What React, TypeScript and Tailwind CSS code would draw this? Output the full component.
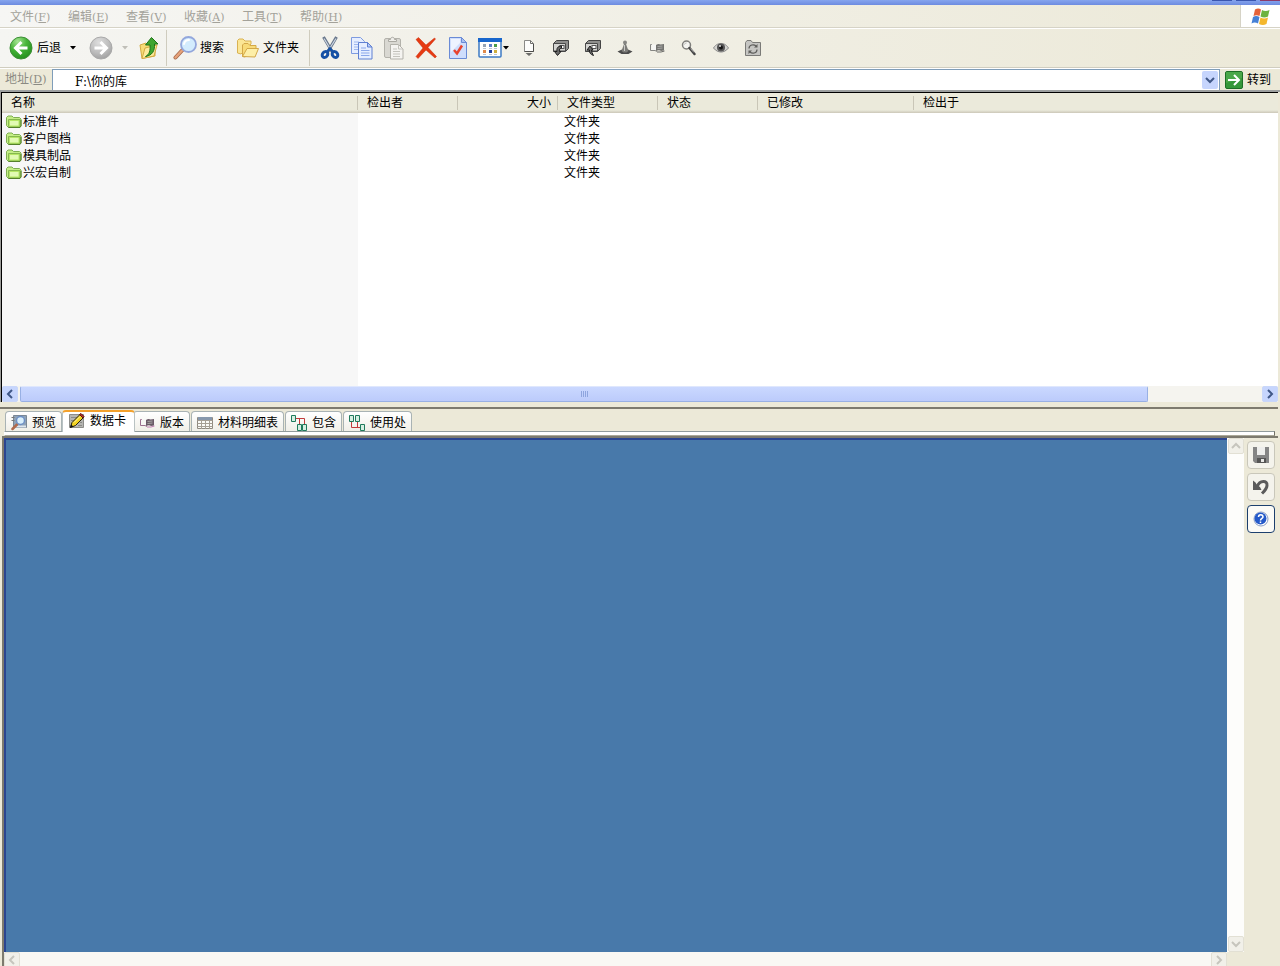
import React, { useState } from 'react'

const menus = [
    { label: '文件', key: 'F' },
    { label: '编辑', key: 'E' },
    { label: '查看', key: 'V' },
    { label: '收藏', key: 'A' },
    { label: '工具', key: 'T' },
    { label: '帮助', key: 'H' },
]

const folders = ['标准件', '客户图档', '模具制品', '兴宏自制']

/* ---------- icons ---------- */

function BackIcon() {
    return (
        <svg width="24" height="24" viewBox="0 0 24 24" aria-hidden="true">
            <defs>
                <radialGradient id="backFill" cx="0.35" cy="0.2" r="0.9">
                    <stop offset="0" stopColor="#a5e493" />
                    <stop offset="0.45" stopColor="#46b438" />
                    <stop offset="1" stopColor="#1f8a1a" />
                </radialGradient>
            </defs>
            <circle cx="12" cy="12" r="11" fill="url(#backFill)" stroke="#3d8f36" />
            <path d="M18.500 12H7.500M12.500 6L6.500 12l6 6" fill="none" stroke="#fff" strokeWidth="3" />
        </svg>
    )
}

function ForwardIcon() {
    return (
        <svg width="24" height="24" viewBox="0 0 24 24" aria-hidden="true">
            <defs>
                <radialGradient id="fwdFill" cx="0.4" cy="0.25" r="0.8">
                    <stop offset="0" stopColor="#dedede" />
                    <stop offset="0.6" stopColor="#bcbcbc" />
                    <stop offset="1" stopColor="#9e9e9e" />
                </radialGradient>
            </defs>
            <circle cx="12" cy="12" r="11" fill="url(#fwdFill)" stroke="#a9a9a9" />
            <path d="M5.500 12h11M11.500 6l6 6-6 6" fill="none" stroke="#fff" strokeWidth="3" />
        </svg>
    )
}

function UpIcon() {
    return (
        <svg width="22" height="24" viewBox="0 0 22 24" aria-hidden="true">
            <path d="M2 9l6-2 2 2 7-1v12L4 22.500z" fill="#f7dc76" stroke="#d3aa41" />
            <path d="M4 22.500L7 12l12-3-3 11z" fill="#fdeb9c" stroke="#d3aa41" />
            <path d="M7.500 20.500c4-2 5-6 4.500-11.500H7.500L13.500 1.500 20 8h-3.500c.5 7-2.500 11.500-9 12.500z" fill="#3fa52f" stroke="#1c7316" />
        </svg>
    )
}

function SearchIcon() {
    return (
        <svg width="24" height="24" viewBox="0 0 24 24" aria-hidden="true">
            <path d="M9 14.500L2.500 21.500" stroke="#a4674a" strokeWidth="4" strokeLinecap="round" />
            <path d="M9 14.500L2.500 21.500" stroke="#e6a27a" strokeWidth="2.500" strokeLinecap="round" />
            <circle cx="15.500" cy="8.500" r="7.500" fill="#d3ecfd" stroke="#93a7dc" strokeWidth="1.800" />
            <path d="M11 8c.5-2.500 2.500-4 5-4" fill="none" stroke="#fff" strokeWidth="2" strokeLinecap="round" />
        </svg>
    )
}

function FoldersIcon() {
    return (
        <svg width="24" height="24" viewBox="0 0 24 24" aria-hidden="true">
            <path d="M1.500 17V4.500L3 3h4l2 2h6v3L5 18z" fill="#fbe695" stroke="#d9b252" />
            <path d="M6.500 20.500V9L8 7.500h4l2 2h6v3L9 21z" fill="#f8db78" stroke="#d3a848" />
            <path d="M6.500 20.500L11 12.500h11.500L19 21z" fill="#fdefa8" stroke="#d3a848" strokeLinejoin="round" />
        </svg>
    )
}

function CutIcon() {
    return (
        <svg width="22" height="24" viewBox="0 0 22 24" aria-hidden="true">
            <path d="M4.500 1L13 15.500M17.500 1L9 15.500" stroke="#66758a" strokeWidth="3" />
            <path d="M5 2.500L12 14M17 2.500L11 12" stroke="#cdd6e2" strokeWidth="1.200" />
            <ellipse cx="6" cy="18.500" rx="2.500" ry="3.200" transform="rotate(40 6 18.500)" fill="none" stroke="#1551a5" strokeWidth="3" />
            <ellipse cx="16" cy="18.500" rx="2.500" ry="3.200" transform="rotate(-40 16 18.500)" fill="none" stroke="#1551a5" strokeWidth="3" />
            <path d="M8 16l3-3.500 3 3.500" fill="none" stroke="#1551a5" strokeWidth="2.500" />
        </svg>
    )
}

function CopyIcon() {
    return (
        <svg width="22" height="24" viewBox="0 0 22 24" aria-hidden="true">
            <path d="M.5 1.500h9l4 4v12H.5z" fill="#e6eeff" stroke="#7e9be0" />
            <path d="M3 6h5M3 8.500h7M3 11h4M3 13.500h4" stroke="#9db6ee" />
            <path d="M7.500 6.500h9l4.500 4.500v12H7.500z" fill="#e6eeff" stroke="#5f80d2" />
            <path d="M16.500 6.500V11H21z" fill="#b7cbf8" stroke="#5f80d2" />
            <path d="M10 12h5M10 14.500h8.500M10 17h8.500M10 19.500h8.500" stroke="#8ba7ea" />
        </svg>
    )
}

function PasteIcon() {
    return (
        <svg width="22" height="24" viewBox="0 0 22 24" aria-hidden="true">
            <rect x="1.500" y="2.500" width="16" height="19" rx="1.500" fill="#d9d8d2" stroke="#b3b2ab" />
            <path d="M5.500 5.500v-2h2c0-3 4-3 4 0h2v2z" fill="#efeeea" stroke="#aaa9a2" />
            <path d="M7.500 8.500h8l4.500 4.500v10H7.500z" fill="#f5f4f1" stroke="#b3b2ab" />
            <path d="M15.500 8.500V13H20M10 13h4M10 15.500h7M10 18h7M10 20.500h7" fill="none" stroke="#c4c3bd" />
        </svg>
    )
}

function DeleteIcon() {
    return (
        <svg width="22" height="24" viewBox="0 0 22 24" aria-hidden="true">
            <path d="M1 3.500L3.500 1.500 11 9 19.500 2l1 1-7.500 8.500 8.500 9-1.500 1.500L11 14l-8 8.500-2-2L8 12z" fill="#e63a12" stroke="#c82d0a" strokeWidth="0.500" />
        </svg>
    )
}

function PropertiesIcon() {
    return (
        <svg width="20" height="24" viewBox="0 0 20 24" aria-hidden="true">
            <path d="M1.500 1.500h12l5 5v16h-17z" fill="#cfdefc" stroke="#6a8bd6" />
            <path d="M3 3h9v4l-9 9z" fill="#eef4ff" />
            <path d="M13.500 1.500v5h5z" fill="#a9c1f3" stroke="#6a8bd6" />
            <path d="M6 14l3 3.500 5-8" fill="none" stroke="#e8432e" strokeWidth="2.500" />
        </svg>
    )
}

function ViewsIcon() {
    return (
        <svg width="24" height="22" viewBox="0 0 24 22" aria-hidden="true">
            <rect x="1" y="2" width="22" height="18" rx="1" fill="#fff" stroke="#3c79c4" strokeWidth="1.500" />
            <path d="M0 1h24v4H0z" fill="#1866cc" />
            <path d="M5 7h3v3H5z" fill="#93a3b4" />
            <path d="M11 7h3v3h-3z" fill="#5f80c8" />
            <path d="M16 7h3v3h-3z" fill="#4b9d4b" />
            <path d="M5 13h3v3H5z" fill="#e0894a" />
            <path d="M11 13h3v3h-3z" fill="#213f9c" />
            <path d="M16 13h3v3h-3z" fill="#cfae3f" />
            <path d="M5 11.500h3M11 11.500h3M16 11.500h3M5 17.500h3M11 17.500h3M16 17.500h3" stroke="#b9c4d4" />
        </svg>
    )
}

function GetIcon() {
    return (
        <svg width="16" height="16" viewBox="0 0 16 16" aria-hidden="true">
            <path d="M3.500.5h6l3 3v8h-9z" fill="#fdfdfb" stroke="#8a8a87" />
            <path d="M9.500.5v3h3" fill="none" stroke="#6f6f6c" />
            <path d="M12.500 4v7.500h-9" fill="none" stroke="#4c4c4a" />
            <path d="M4.500 13h7L8 16z" fill="#6b6b68" />
        </svg>
    )
}

function VaultIcon({ into = false }: { into?: boolean }) {
    return (
        <svg width="16" height="16" viewBox="0 0 16 16" aria-hidden="true">
            <path d="M.5 3.500L3.500.5h12v8l-3 3H.5z" fill="#8f8f8d" stroke="#444" />
            <path d="M.5 3.500h12v7.500H.5z" fill="#d5d5d2" stroke="#4a4a4a" />
            <rect x="7" y="5.500" width="4" height="3" fill="#fff" stroke="#555" />
            {into ? (
                <path d="M8.500 15.500c-3-1-4.500-3-4-5.500H2L5 6l3 4H6.500c0 2 1 3.500 2 5.500z" fill="#6b6b6b" stroke="#1e1e1e" />
            ) : (
                <path d="M8.500 6c-4 0-5 2.500-4.500 5.500H1.500l3 4 3.500-4H6.500c-.5-2 .5-3.500 2-3.500z" fill="#6b6b6b" stroke="#1e1e1e" />
            )}
        </svg>
    )
}

function StateIcon() {
    return (
        <svg width="16" height="16" viewBox="0 0 16 16" aria-hidden="true">
            <path d="M.5 11.500L5 9.500h6l4.500 2-4 2.500h-7z" fill="#4b4b4b" />
            <path d="M4.500 11L7 4h2l2.500 7-2 1.500h-3z" fill="#7b7b78" />
            <circle cx="8" cy="2.500" r="2" fill="#858582" />
            <path d="M7.500 5v6" stroke="#c9c9c6" />
        </svg>
    )
}

function HistoryIcon({ tint = false }: { tint?: boolean }) {
    return (
        <svg width="16" height="16" viewBox="0 0 16 16" aria-hidden="true">
            <path d="M3 4.500H1.500v6H6c1 0 1 1 2 1" fill="none" stroke={tint ? '#9b6f8f' : '#858582'} />
            <path d="M2.500 4.500H7v5.500H2.500z" fill="#f6f6f4" />
            <path d="M7 5c2-1.500 3.500-1 4.500-.5L15 4v6.500l-3 .5c-1-1-3-1-5 0z" fill={tint ? '#6b5a68' : '#737370'} />
            <path d="M8.500 6.500l5-.5M8.500 8.500l5-.5" stroke="#a9a9a6" />
            <path d="M8 12h4l3.500-1" fill="none" stroke={tint ? '#c07fb0' : '#6a6a68'} />
        </svg>
    )
}

function LensIcon() {
    return (
        <svg width="16" height="16" viewBox="0 0 16 16" aria-hidden="true">
            <circle cx="5.500" cy="5" r="4" fill="#f4f4f1" stroke="#7e7e7b" strokeWidth="1.500" />
            <path d="M3.500 4.500c.3-1 1-1.500 2-1.500" stroke="#b5b5b2" fill="none" />
            <path d="M8.500 8l5 6" stroke="#444" strokeWidth="2.500" strokeLinecap="round" />
            <path d="M9.500 8.500l3.500 4" stroke="#aaa" />
        </svg>
    )
}

function EyeIcon() {
    return (
        <svg width="16" height="16" viewBox="0 0 16 16" aria-hidden="true">
            <path d="M.5 8C3 4 6 3.500 8 3.500S13 4 15.500 8C13 11 10.500 12 8 12S3 11 .5 8z" fill="#d4d4d0" stroke="#888" />
            <circle cx="8" cy="7.500" r="4" fill="#555" />
            <circle cx="8" cy="7.500" r="2" fill="#161616" />
            <circle cx="7" cy="6" r="1" fill="#ddd" />
        </svg>
    )
}

function RefreshIcon() {
    return (
        <svg width="16" height="16" viewBox="0 0 16 16" aria-hidden="true">
            <path d="M.5 15.500V2.500l1.500-2h4l1.500 2h8v13z" fill="#c5c5c2" stroke="#7a7a77" />
            <path d="M4 8.500c0-4 5-4.500 7-2.500M12 9.500c0 4-5 4.500-7 2.500" fill="none" stroke="#5e5e5b" strokeWidth="1.200" />
            <path d="M12.500 4v3.500H9zM3.500 14v-3.500H7z" fill="#5e5e5b" />
        </svg>
    )
}

function WindowsLogo() {
    return (
        <svg width="20" height="19" viewBox="0 0 20 19" aria-hidden="true">
            <path d="M4 2.500C6.500 1 8.500 1.500 10 2.500L8.500 9C6.500 8 4.500 8 2.500 9z" fill="#e5623a" />
            <path d="M11 3c2 1 4.500 1.500 7.500 0L17 9.500c-3 1.500-5 1-7.500 0z" fill="#6db33f" />
            <path d="M2 10c2.500-1.500 4.500-1 6.500 0L7 16.500c-2-1-4-1.500-6.500 0z" fill="#4580d6" />
            <path d="M9.500 10.500c2 1 4.500 1.500 7.500 0L15.500 17c-3 1.500-5 1-7.500 0z" fill="#f4b72c" />
        </svg>
    )
}

function GoIcon() {
    return (
        <svg width="18" height="18" viewBox="0 0 18 18" aria-hidden="true">
            <rect x="0.500" y="0.500" width="17" height="17" rx="1.500" fill="#35973a" stroke="#1d6f26" />
            <path d="M1 1h16v6L1 12z" fill="#59b353" opacity="0.600" />
            <path d="M3 9h10M9 4l5 5-5 5" fill="none" stroke="#fff" strokeWidth="2" />
        </svg>
    )
}

function GreenFolder() {
    return (
        <svg width="16" height="14" viewBox="0 0 16 14" className="shrink-0" aria-hidden="true">
            <path d="M.5 10.500v-8L2 1h4l1.500 1.500h6L15 4v7l-1.500 1.500h-11z" fill="#c4ee86" stroke="#7fae52" />
            <path d="M2.500 11.500V4.500h11.500v7.500H3z" fill="#b6e766" stroke="#86b84f" />
            <path d="M4 6h8.500v4.500H4z" fill="#e2fab4" />
            <path d="M2.500 12.500h11.500l1-1.500V5" fill="none" stroke="#55802c" />
        </svg>
    )
}

function PreviewIcon() {
    return (
        <svg width="16" height="16" viewBox="0 0 16 16" aria-hidden="true">
            <path d="M2.500.5h13v12h-13z" fill="#8fa3b8" stroke="#7a8795" />
            <path d="M.5 2.500h3M.5 5.500h3" stroke="#777" />
            <path d="M4 11.500h11" stroke="#dfe7ee" strokeWidth="2" />
            <path d="M6 9.500L1.500 14" stroke="#b06a4c" strokeWidth="2.500" strokeLinecap="round" />
            <circle cx="9.500" cy="5.500" r="4" fill="#d9effb" stroke="#6d8fc4" strokeWidth="1.500" />
        </svg>
    )
}

function CardIcon() {
    return (
        <svg width="16" height="16" viewBox="0 0 16 16" aria-hidden="true">
            <path d="M.5 1.500h14v13H.5z" fill="#b5b5b2" stroke="#8d8d8a" />
            <path d="M2 4.500h8M2 7.500h6M2 10.500h4M9 12.500h4M11 9.500h2" stroke="#8a8a87" />
            <path d="M1.500 14.500l1.500-5L11 1.500 14.500 4.500 6.500 12.500z" fill="#f3d321" stroke="#27230a" />
            <path d="M10.500 1.500L12 .5l3 3-1 1.500z" fill="#c0302a" stroke="#5a1512" />
            <path d="M1 15l1-3.500 2.500 2z" fill="#111" />
            <path d="M5 9.500l6-6" stroke="#fff6a8" />
        </svg>
    )
}

function TableIcon() {
    return (
        <svg width="16" height="14" viewBox="0 0 16 14" aria-hidden="true">
            <path d="M.5 1.500h15v11H.5z" fill="#fafaf6" stroke="#8f8a80" />
            <path d="M1 1h14v3H1z" fill="#8798ad" />
            <path d="M.5 4.500h15M.5 7.500h15M.5 10.500h15M4.500 4v9M8.500 4v9M12.500 4v9" stroke="#a59f94" />
        </svg>
    )
}

function ContainsIcon() {
    return (
        <svg width="16" height="16" viewBox="0 0 16 16" aria-hidden="true">
            <path d="M5 3.500h8.500V9M8.500 4v5" fill="none" stroke="#c23b3b" />
            <path d="M.5.5h4v6h-4zM6.500 9.500h4v6h-4zM11.500 9.500h4v6h-4z" fill="#d6efe2" stroke="#1f7a5c" />
        </svg>
    )
}

function WhereUsedIcon() {
    return (
        <svg width="16" height="16" viewBox="0 0 16 16" aria-hidden="true">
            <path d="M2.500 7v5.500H11M8.500 7v5" fill="none" stroke="#c23b3b" />
            <path d="M.5.5h4v6h-4zM6.500.5h4v6h-4zM11.500 9.500h4v6h-4z" fill="#d6efe2" stroke="#1f7a5c" />
        </svg>
    )
}

function SaveIcon() {
    return (
        <svg width="16" height="16" viewBox="0 0 16 16" aria-hidden="true">
            <path d="M0 0h16v16H2l-2-2z" fill="#858585" />
            <path d="M4 0h8v8H4z" fill="#eeeeec" />
            <path d="M4 11h9v5H4z" fill="#555" />
            <path d="M8 12h3v3H8z" fill="#e8e8e6" />
        </svg>
    )
}

function UndoIcon() {
    return (
        <svg width="18" height="18" viewBox="0 0 18 18" aria-hidden="true">
            <path d="M5 8.500C8 2 15.500 2 15 7.500c-.3 3.500-2 5-5 8" fill="none" stroke="#5b5b5b" strokeWidth="3" />
            <path d="M1 2.500l2.500 2L5 7l3 2 1.500 3H1z" fill="#5b5b5b" />
        </svg>
    )
}

function HelpIcon() {
    return (
        <svg width="16" height="16" viewBox="0 0 16 16" aria-hidden="true">
            <circle cx="8" cy="8" r="7" fill="#fff" stroke="#8a9cc4" />
            <circle cx="7.500" cy="7.500" r="6" fill="#2459c9" />
            <path d="M5.500 6c0-3 4.500-3 4.500 0 0 1.500-2.500 1.500-2.500 3.500M7.500 10.500v1.500" fill="none" stroke="#fff" strokeWidth="1.500" />
        </svg>
    )
}

function DownArrow({ faded = false }: { faded?: boolean }) {
    return (
        <svg width="6" height="4" viewBox="0 0 6 4" className="shrink-0" aria-hidden="true">
            <path d="M0 0h6L3 3.500z" fill={faded ? '#c0bfb8' : '#000'} />
        </svg>
    )
}

const chevrons = {
    left: 'M7 1L3 5l4 4',
    right: 'M3 1l4 4-4 4',
    up: 'M1 7l4-4 4 4',
    down: 'M1 3l4 4 4-4',
}

function ScrollButton({ dir, label, disabled = false }: { dir: keyof typeof chevrons, label: string, disabled?: boolean }) {
    return (
        <button
            type="button"
            aria-label={label}
            disabled={disabled}
            className={
                disabled
                    ? 'flex size-4 shrink-0 items-center justify-center rounded-xs border border-[#e2e0d4] bg-[#f1f0e9]'
                    : 'flex size-4 shrink-0 items-center justify-center rounded-xs border border-[#c9d7fa] bg-[#c6d5fd]'
            }
        >
            <svg width="10" height="10" viewBox="0 0 10 10" className="shrink-0" aria-hidden="true">
                <path d={chevrons[dir]} fill="none" stroke={disabled ? '#c6c5bd' : '#3f5787'} strokeWidth="2" />
            </svg>
        </button>
    )
}

/* ---------- small pieces ---------- */

function Mnemonic({ char }: { char: string }) {
    return (
        <span className="font-['DejaVu_Serif',serif] text-[11px]">
            (<u>{char}</u>)
        </span>
    )
}

function Tool({ label, children }: { label: string, children: React.ReactNode }) {
    return (
        <button type="button" aria-label={label} title={label} className="flex h-8 w-8 shrink-0 items-center justify-center">
            {children}
        </button>
    )
}

function Separator() {
    return <div className="h-9 w-px shrink-0 bg-[#cfccbe]" />
}

function HeaderCell({ children, right = false, last = false }: { children: React.ReactNode, right?: boolean, last?: boolean }) {
    return (
        <th scope="col" className="h-5 p-0 font-normal">
            <div
                className={
                    (right ? 'text-right ' : 'text-left ') +
                    (last ? '' : 'border-r border-[#c9c6b7] ') +
                    'h-3.5 pr-1.5 pl-[9px] leading-[14px]'
                }
            >
                {children}
            </div>
        </th>
    )
}

const tabs = [
    { id: 'preview', label: '预览', icon: <PreviewIcon /> },
    { id: 'card', label: '数据卡', icon: <CardIcon /> },
    { id: 'version', label: '版本', icon: <HistoryIcon tint /> },
    { id: 'bom', label: '材料明细表', icon: <TableIcon /> },
    { id: 'contains', label: '包含', icon: <ContainsIcon /> },
    { id: 'used', label: '使用处', icon: <WhereUsedIcon /> },
]

export default function App() {
    const [tab, setTab] = useState('card')
    const [path, setPath] = useState('F:\\你的库')

    return (
        <div className="flex h-screen flex-col overflow-hidden bg-[#ece9d8] font-['Liberation_Sans','Noto_Sans_CJK_SC',sans-serif] text-[12px] leading-4 text-black">
            {/* window caption, only its lower edge shows */}
            <div className="flex h-[5px] shrink-0 items-start justify-end gap-1 bg-linear-to-b from-[#86a5ee] to-[#6d8be0]">
                <div className="h-px w-5 bg-[#3a56b0]" />
                <div className="h-px w-5 bg-[#3a56b0]" />
                <div className="h-px w-5 bg-[#8c3a6a]" />
            </div>

            {/* menu */}
            <div className="flex h-[23px] shrink-0 border-b border-[#d6d3c6] bg-linear-to-r from-[#f6f6f4] to-[#ece9d8]">
                <nav className="flex flex-1 items-center pt-0.5 pl-0.5 text-[#a3a29a]">
                    {menus.map(m => (
                        <button key={m.key} type="button" className="w-[58px] pl-2 text-left whitespace-nowrap">
                            {m.label}<Mnemonic char={m.key} />
                        </button>
                    ))}
                </nav>
                <div className="flex w-10 items-center justify-center border-l border-[#d6d3c6] bg-white">
                    <WindowsLogo />
                </div>
            </div>

            {/* toolbar */}
            <div className="flex h-10 shrink-0 items-center border-t border-b border-t-white border-b-[#d0cdbf] bg-linear-to-r from-[#f5f5f2] to-[#ece9d8] pl-[9px]">
                <button type="button" className="flex items-center gap-1">
                    <BackIcon />
                    后退
                </button>
                <button type="button" aria-label="后退历史" className="flex h-6 w-6 items-center justify-center">
                    <DownArrow />
                </button>
                <button type="button" aria-label="前进" className="ml-1 flex items-center">
                    <ForwardIcon />
                </button>
                <button type="button" aria-label="前进历史" className="flex h-6 w-6 items-center justify-center">
                    <DownArrow faded />
                </button>
                <button type="button" aria-label="向上" className="mr-1.5 ml-px flex items-center">
                    <UpIcon />
                </button>
                <Separator />
                <button type="button" className="ml-1.5 flex items-center gap-[3px]">
                    <SearchIcon />
                    搜索
                </button>
                <button type="button" className="mr-[10px] ml-3 flex items-center gap-[3px]">
                    <FoldersIcon />
                    文件夹
                </button>
                <Separator />
                <div className="ml-1 flex">
                    <Tool label="剪切"><CutIcon /></Tool>
                    <Tool label="复制"><CopyIcon /></Tool>
                    <Tool label="粘贴"><PasteIcon /></Tool>
                    <Tool label="删除"><DeleteIcon /></Tool>
                    <Tool label="属性"><PropertiesIcon /></Tool>
                </div>
                <button type="button" aria-label="查看方式" className="flex h-8 w-[39px] items-center justify-center gap-px">
                    <ViewsIcon />
                    <DownArrow />
                </button>
                <Tool label="获取"><GetIcon /></Tool>
                <Tool label="检出"><VaultIcon /></Tool>
                <Tool label="检入"><VaultIcon into /></Tool>
                <Tool label="更改状态"><StateIcon /></Tool>
                <Tool label="历史记录"><HistoryIcon /></Tool>
                <Tool label="搜索文件"><LensIcon /></Tool>
                <Tool label="查看文件"><EyeIcon /></Tool>
                <Tool label="刷新"><RefreshIcon /></Tool>
            </div>

            {/* address bar */}
            <div className="flex h-6 shrink-0 items-center border-t border-b-2 border-t-white border-b-[#9da0a0] bg-[#ece9d8]">
                <label htmlFor="address" className="w-[52px] shrink-0 pl-[5px] whitespace-nowrap text-[#8b8a82]">
                    地址<Mnemonic char="D" />
                </label>
                <div className="flex h-[21px] flex-1 items-center border border-b-0 border-[#7f9db9] bg-white pr-px">
                    <input
                        id="address"
                        value={path}
                        onChange={e => setPath(e.target.value)}
                        className="h-5 min-w-0 flex-1 pl-[22px] font-['DejaVu_Serif','Noto_Sans_CJK_SC',serif] outline-none"
                    />
                    <button type="button" aria-label="地址列表" className="flex h-[18px] w-4 items-center justify-center rounded-xs bg-[#c6d5fd]">
                        <svg width="10" height="10" viewBox="0 0 10 10" aria-hidden="true">
                            <path d={chevrons.down} fill="none" stroke="#3f5787" strokeWidth="2" />
                        </svg>
                    </button>
                </div>
                <button type="button" className="flex shrink-0 items-center gap-1 pr-[9px] pl-[5px]">
                    <GoIcon />
                    转到
                </button>
            </div>

            {/* file list */}
            <div className="mr-0.5 ml-px flex h-[310px] shrink-0 flex-col border-t border-l border-black bg-white shadow-[-1px_0_0_#9d9d9a]">
                <div className="min-h-0 flex-1">
                    <table className="h-full w-full table-fixed border-collapse">
                        <colgroup>
                            <col className="w-[356px]" />
                            <col className="w-[100px]" />
                            <col className="w-[100px]" />
                            <col className="w-[100px]" />
                            <col className="w-[100px]" />
                            <col className="w-[156px]" />
                            <col />
                        </colgroup>
                        <thead className="bg-[linear-gradient(#ebeadb_0_85%,#cbc7b8)]">
                            <tr>
                                <HeaderCell>名称</HeaderCell>
                                <HeaderCell>检出者</HeaderCell>
                                <HeaderCell right>大小</HeaderCell>
                                <HeaderCell>文件类型</HeaderCell>
                                <HeaderCell>状态</HeaderCell>
                                <HeaderCell>已修改</HeaderCell>
                                <HeaderCell last>检出于</HeaderCell>
                            </tr>
                        </thead>
                        <tbody>
                            {folders.map(name => (
                                <tr key={name} className="h-[17px]">
                                    <td className="bg-[#f7f7f7] p-0 pl-1">
                                        <div className="flex items-center gap-px">
                                            <GreenFolder />
                                            {name}
                                        </div>
                                    </td>
                                    <td className="p-0" />
                                    <td className="p-0" />
                                    <td className="p-0 pl-1.5">文件夹</td>
                                    <td className="p-0" colSpan={3} />
                                </tr>
                            ))}
                            <tr>
                                <td className="bg-[#f7f7f7] p-0" />
                                <td className="p-0" colSpan={6} />
                            </tr>
                        </tbody>
                    </table>
                </div>
                <div className="flex h-4 shrink-0 items-center gap-0.5 bg-[#f5f4ef]">
                    <ScrollButton dir="left" label="向左滚动" />
                    <div className="flex flex-1">
                        <div className="flex h-4 w-[91%] items-center justify-center gap-px rounded-xs border border-[#98b0e4] border-t-[#dfe7fd] bg-linear-to-b from-[#cad8ff] to-[#bccbfb]">
                            <div className="h-1.5 w-px bg-[#8ea5de]" />
                            <div className="h-1.5 w-px bg-[#8ea5de]" />
                            <div className="h-1.5 w-px bg-[#8ea5de]" />
                            <div className="h-1.5 w-px bg-[#8ea5de]" />
                        </div>
                    </div>
                    <ScrollButton dir="right" label="向右滚动" />
                </div>
            </div>

            {/* details pane */}
            <div className="mt-[5px] mr-0.5 flex min-h-0 flex-1 flex-col border-t-2 border-[#7d7a6e]">
                <div role="tablist" className="flex h-[22px] shrink-0 items-end gap-px pl-[5px]">
                    {tabs.map(t => (
                        <button
                            key={t.id}
                            type="button"
                            role="tab"
                            aria-selected={tab === t.id}
                            onClick={() => setTab(t.id)}
                            className={
                                tab === t.id
                                    ? 'z-10 -mr-[3px] -mb-px -ml-px flex h-[22px] items-center gap-[5px] rounded-t-sm border-x border-t-2 border-x-[#b9c2c3] border-t-[#f3a12c] bg-white pr-2 pb-0.5 pl-1.5'
                                    : 'flex h-5 items-center gap-[5px] rounded-t-sm border border-b-0 border-[#a9b3b4] bg-linear-to-b from-white to-[#f0efe8] px-[5px] pt-0.5'
                            }
                        >
                            {t.icon}
                            {t.label}
                        </button>
                    ))}
                </div>
                <div className="mr-[3px] ml-1 h-[5px] shrink-0 border border-t-[#919b9c] border-r-[#716f64] border-b-[#aaa898] border-l-white bg-white" />

                <div className="ml-0.5 flex min-h-0 flex-1 border-t-2 border-l-2 border-[#7d7a6e]">
                    <div className="flex min-w-0 flex-1 flex-col">
                        <div className="flex min-h-0 flex-1">
                            <div role="tabpanel" className="flex-1 border-t-2 border-l-2 border-[#2b4590] bg-[#4879aa]" />
                            <div className="flex w-[17px] flex-col items-center justify-between bg-[#fdfdfb]">
                                <ScrollButton dir="up" label="向上滚动" disabled />
                                <ScrollButton dir="down" label="向下滚动" disabled />
                            </div>
                        </div>
                        <div className="mr-[17px] flex h-3.5 shrink-0 items-start justify-between bg-[#f9f8f4]">
                            <ScrollButton dir="left" label="数据卡向左滚动" disabled />
                            <ScrollButton dir="right" label="数据卡向右滚动" disabled />
                        </div>
                    </div>
                    <div className="flex w-[34px] shrink-0 flex-col gap-1 pt-[3px] pl-[3px]">
                        <button type="button" aria-label="保存" className="flex size-7 items-center justify-center rounded-sm border border-[#c9c7ba] bg-[#f4f3ec]">
                            <SaveIcon />
                        </button>
                        <button type="button" aria-label="撤消" className="flex size-7 items-center justify-center rounded-sm border border-[#c9c7ba] bg-[#f4f3ec]">
                            <UndoIcon />
                        </button>
                        <button type="button" aria-label="帮助" className="flex size-7 items-center justify-center rounded-sm border border-[#1c3f6e] bg-[#fbfaf6]">
                            <HelpIcon />
                        </button>
                    </div>
                </div>
            </div>
        </div>
    )
}
